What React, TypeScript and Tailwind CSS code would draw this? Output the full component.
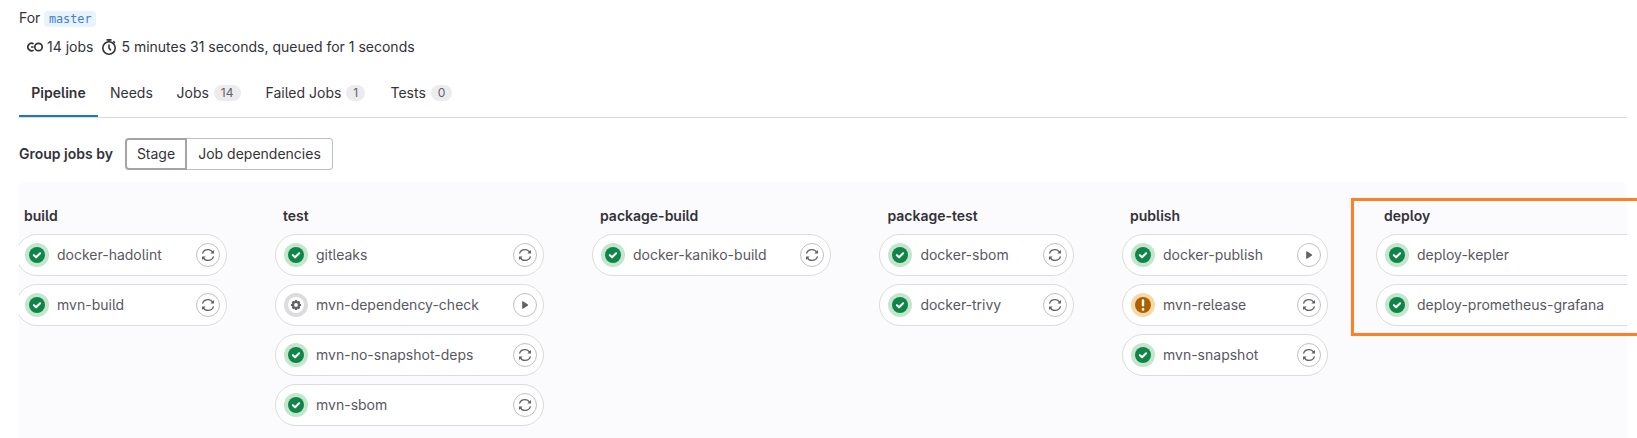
import type { ReactNode } from "react";

type Status = "success" | "manual" | "warning";
type Action = "retry" | "play" | "none";
interface Job {
  name: string;
  status: Status;
  action: Action;
}
interface Stage {
  name: string;
  width: string;
  jobs: Job[];
}

const stages: Stage[] = [
  {
    name: "build",
    width: "w-[211px]",
    jobs: [
      { name: "docker-hadolint", status: "success", action: "retry" },
      { name: "mvn-build", status: "success", action: "retry" },
    ],
  },
  {
    name: "test",
    width: "w-[269px]",
    jobs: [
      { name: "gitleaks", status: "success", action: "retry" },
      { name: "mvn-dependency-check", status: "manual", action: "play" },
      { name: "mvn-no-snapshot-deps", status: "success", action: "retry" },
      { name: "mvn-sbom", status: "success", action: "retry" },
    ],
  },
  {
    name: "package-build",
    width: "w-[239.4px]",
    jobs: [{ name: "docker-kaniko-build", status: "success", action: "retry" }],
  },
  {
    name: "package-test",
    width: "w-[194.6px]",
    jobs: [
      { name: "docker-sbom", status: "success", action: "retry" },
      { name: "docker-trivy", status: "success", action: "retry" },
    ],
  },
  {
    name: "publish",
    width: "w-[206px]",
    jobs: [
      { name: "docker-publish", status: "success", action: "play" },
      { name: "mvn-release", status: "warning", action: "retry" },
      { name: "mvn-snapshot", status: "success", action: "retry" },
    ],
  },
  {
    name: "deploy",
    width: "w-[300px]",
    jobs: [
      { name: "deploy-kepler", status: "success", action: "none" },
      { name: "deploy-prometheus-grafana", status: "success", action: "none" },
    ],
  },
];

function StatusIcon({ status }: { status: Status }) {
  if (status === "manual") {
    return (
      <svg viewBox="0 0 24 24" className="size-6 shrink-0">
        <circle cx="12" cy="12" r="12" fill="#dcdcde" />
        <circle cx="12" cy="12" r="8" fill="#fff" />
        <circle cx="12" cy="12" r="3" fill="none" stroke="#626168" strokeWidth="2.2" />
        <path
          d="M12 7v2M12 15v2M7 12h2M15 12h2M8.5 8.5l1.3 1.3M14.2 14.2l1.3 1.3M15.5 8.5l-1.3 1.3M9.8 14.2l-1.3 1.3"
          stroke="#626168"
          strokeWidth="2.2"
        />
      </svg>
    );
  }
  if (status === "warning") {
    return (
      <svg viewBox="0 0 24 24" className="size-6 shrink-0">
        <circle cx="12" cy="12" r="12" fill="#f5d9a8" />
        <circle cx="12" cy="12" r="8" fill="#ab6100" />
        <path d="M12 7.4v4.9" stroke="#fff" strokeWidth="2.4" strokeLinecap="round" />
        <circle cx="12" cy="16.4" r="1.3" fill="#fff" />
      </svg>
    );
  }
  return (
    <svg viewBox="0 0 24 24" className="size-6 shrink-0">
      <circle cx="12" cy="12" r="12" fill="#c3e6cd" />
      <circle cx="12" cy="12" r="8" fill="#108548" />
      <path
        d="M8.9 12.2l2.2 2.1 4-4"
        fill="none"
        stroke="#fff"
        strokeWidth="2.1"
        strokeLinecap="round"
        strokeLinejoin="round"
      />
    </svg>
  );
}

function ActionButton({ action }: { action: Action }) {
  return (
    <button className="flex size-6 shrink-0 items-center justify-center rounded-full border border-[#bfbfc3] bg-white">
      {action === "play" ? (
        <svg viewBox="0 0 12 12" className="size-3">
          <path d="M3.2 2.8v6.4q0 .9.8.5l4.9-3.2q.6-.5 0-1L4 2.3q-.8-.4-.8.5z" fill="#626168" />
        </svg>
      ) : (
        <svg viewBox="0 0 14 14" className="size-3.5" fill="none" stroke="#626168" strokeWidth="1.3">
          <path d="M1.5 5.600C2.200 3 4.400 1.600 7 1.600c2 0 3.600.9 4.600 2.600M12.500 8.400C11.800 11 9.600 12.400 7 12.400c-2 0-3.600-.9-4.600-2.600" />
          <path d="M13 1.900v3.700H9.300zM1 12.100V8.400h3.700z" fill="#626168" stroke="none" />
        </svg>
      )}
    </button>
  );
}

function JobPill({ job }: { job: Job }) {
  return (
    <div className="flex h-[42px] items-center rounded-full border border-[#dcdcde] bg-white px-2 pr-1.5">
      <StatusIcon status={job.status} />
      <span className="ml-2 flex-1 whitespace-nowrap text-[#59585f]">{job.name}</span>
      {job.action !== "none" && <ActionButton action={job.action} />}
    </div>
  );
}

function Tab({ label, count, width }: { label: string; count?: number; width: string }) {
  return (
    <a className={"flex h-[50px] shrink-0 items-center gap-[5px] pl-3 " + width}>
      {label}
      {count !== undefined && (
        <span className="flex h-4 items-center rounded-full bg-[#ececef] px-[7px] text-xs text-[#626168]">
          {count}
        </span>
      )}
    </a>
  );
}

function Row({ children }: { children: ReactNode }) {
  return <div className="flex items-center">{children}</div>;
}

export default function App() {
  return (
    <div className="relative flex h-[438px] w-[1637px] flex-col overflow-hidden bg-white pl-[19px] pr-[10px] font-['Inter',sans-serif] text-sm leading-5 text-[#333238] [font-feature-settings:'cv05']">
      <div className="mt-2 h-5">
        <Row>
          For
          <code className="ml-1 mt-0.5 h-4 rounded bg-[#e9f3fc] px-[4.5px] font-['DejaVu_Sans_Mono',monospace] text-[11.8px] leading-4 text-[#3f7fd0]">
            master
          </code>
        </Row>
      </div>
      <div className="mt-[9px] h-5 pl-2">
        <Row>
          <svg viewBox="0 0 16 16" className="size-4" fill="none" stroke="#333238" strokeWidth="1.7">
            <circle cx="11.5" cy="8" r="3.7" />
            <path d="M6.6 4.9A3.7 3.7 0 1 0 6.6 11.1M4 8h2.6" />
          </svg>
          <span className="ml-1">14 jobs</span>
          <svg viewBox="0 0 16 16" className="ml-2 size-4" fill="none" stroke="#333238" strokeWidth="1.6">
            <circle cx="8" cy="9" r="6.2" />
            <path d="M8 5.5V9l1.8 2.4M5.5.9h5M8 1v2M12.3 2.3l1.6 1.6" />
          </svg>
          <span className="ml-1">5 minutes 31 seconds, queued for 1 seconds</span>
        </Row>
      </div>
      <nav className="mt-[11px] flex h-[50px] shrink-0 border-b border-[#dcdcde]">
        <a className="flex h-[49px] w-[79px] shrink-0 items-center justify-center border-b-2 border-[#1f75cb] pt-[3px] font-semibold">
          Pipeline
        </a>
        <Tab label="Needs" width="w-[66.5px]" />
        <Tab label="Jobs" count={14} width="w-[89px]" />
        <Tab label="Failed Jobs" count={1} width="w-[125px]" />
        <Tab label="Tests" count={0} width="w-[88px]" />
      </nav>
      <div className="mt-5 flex h-8 shrink-0 items-center">
        <span className="w-[106px] shrink-0 font-semibold">Group jobs by</span>
        <button className="h-8 w-[62px] rounded-l border-2 border-[#a4a3a8]">Stage</button>
        <button className="h-8 w-[146px] rounded-r border border-l-0 border-[#bfbfc3]">Job dependencies</button>
      </div>
      <main className="mt-3 flex-1 overflow-hidden rounded-t-md bg-[#fbfafd]">
        <div className="-ml-[3px] flex w-max gap-12 pt-6">
          {stages.map((stage) => (
            <section key={stage.name} className={"flex shrink-0 flex-col gap-2 " + stage.width}>
              <h2 className="pl-2 font-semibold">{stage.name}</h2>
              {stage.jobs.map((job) => (
                <JobPill key={job.name} job={job} />
              ))}
            </section>
          ))}
        </div>
      </main>
      <div className="absolute left-[1351px] top-[198px] h-[138px] w-[300px] border-[3px] border-[#ff7f27]" />
    </div>
  );
}
